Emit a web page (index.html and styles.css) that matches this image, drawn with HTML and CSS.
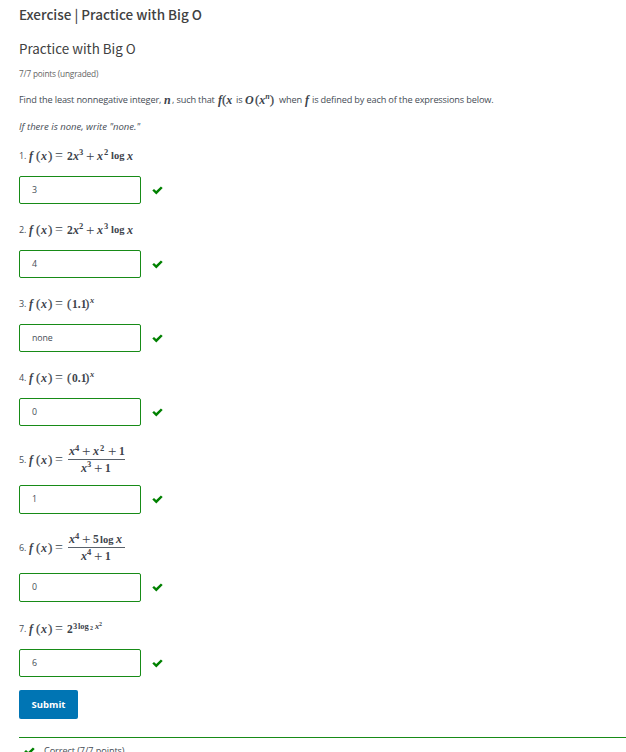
FILE: index.html
```html
<!DOCTYPE html>
<html lang="en">
<head>
<meta charset="utf-8">
<title>Practice with Big O</title>
<link rel="stylesheet" href="styles.css">
</head>
<body>
<svg width="0" height="0" class="defs"><symbol id="check" viewBox="0 0 11 9"><path d="M0.3 4.6 2 2.9 4.2 5 8.9 0.4 10.7 2.1 4.3 8.5Z" fill="#008100"/></symbol></svg>
<main>
<h1>Exercise | Practice with Big O</h1>
<h2>Practice with Big O</h2>
<p class="points">7/7 points (ungraded)</p>
<p class="intro"><span class="t1">Find the least nonnegative integer,</span><span class="m n1">n</span><span class="t2">, such that</span><span class="m fx">f<b>(</b>x</span><span class="t3">is</span><span class="m ox">O</span><span class="m xn"><b>(</b>x<sup>n</sup><b>)</b></span><span class="t4">when</span><span class="m f4">f</span><span class="t5">is defined by each of the expressions below.</span></p>
<p class="hint">If there is none, write "none."</p>

<section class="problem">
<div class="label"><span class="num">1.</span><span class="math"><i class="f">f</i><b class="lp">(</b><i class="x">x</i><b class="rp">)</b><b class="eq">=</b><b class="d">2</b><i class="x v">x</i><sup>3</sup><b class="plus">+</b><i class="x">x</i><sup>2</sup><b class="log">log</b><i class="x">x</i></span></div>
<div class="answer"><div class="field">3</div><svg class="check"><use href="#check"/></svg></div>
</section>
<section class="problem">
<div class="label"><span class="num">2.</span><span class="math"><i class="f">f</i><b class="lp">(</b><i class="x">x</i><b class="rp">)</b><b class="eq">=</b><b class="d">2</b><i class="x v">x</i><sup>2</sup><b class="plus">+</b><i class="x">x</i><sup>3</sup><b class="log">log</b><i class="x">x</i></span></div>
<div class="answer"><div class="field">4</div><svg class="check"><use href="#check"/></svg></div>
</section>
<section class="problem">
<div class="label"><span class="num">3.</span><span class="math"><i class="f">f</i><b class="lp">(</b><i class="x">x</i><b class="rp">)</b><b class="eq">=</b><b class="lp">(</b><b class="dec">1.1</b><b class="cp">)</b><sup><i>x</i></sup></span></div>
<div class="answer"><div class="field">none</div><svg class="check"><use href="#check"/></svg></div>
</section>
<section class="problem">
<div class="label"><span class="num">4.</span><span class="math"><i class="f">f</i><b class="lp">(</b><i class="x">x</i><b class="rp">)</b><b class="eq">=</b><b class="lp">(</b><b class="dec">0.1</b><b class="cp">)</b><sup><i>x</i></sup></span></div>
<div class="answer"><div class="field">0</div><svg class="check"><use href="#check"/></svg></div>
</section>
<section class="problem tall">
<div class="label"><span class="num">5.</span><span class="math"><i class="f">f</i><b class="lp">(</b><i class="x">x</i><b class="rp">)</b><b class="eq">=</b></span><span class="frac"><span class="math top"><i class="x v">x</i><sup>4</sup><b class="plus">+</b><i class="x">x</i><sup class="wide">2</sup><b class="plus">+</b><b>1</b></span><span class="math bottom"><i class="x v">x</i><sup>3</sup><b class="plus">+</b><b>1</b></span></span></div>
<div class="answer"><div class="field">1</div><svg class="check"><use href="#check"/></svg></div>
</section>
<section class="problem tall">
<div class="label"><span class="num">6.</span><span class="math"><i class="f">f</i><b class="lp">(</b><i class="x">x</i><b class="rp">)</b><b class="eq">=</b></span><span class="frac"><span class="math top"><i class="x v">x</i><sup>4</sup><b class="plus">+</b><b class="five-n">5</b><b class="log">log</b><i class="x">x</i></span><span class="math bottom"><i class="x v">x</i><sup>4</sup><b class="plus">+</b><b>1</b></span></span></div>
<div class="answer"><div class="field">0</div><svg class="check"><use href="#check"/></svg></div>
</section>
<section class="problem seven">
<div class="label"><span class="num">7.</span><span class="math"><i class="f">f</i><b class="lp">(</b><i class="x">x</i><b class="rp">)</b><b class="eq">=</b><b class="d">2</b><span class="power"><b class="p3">3</b><b class="plog">log</b><b class="tiny sub">2</b><i class="px">x</i><b class="tiny up">2</b></span></span></div>
<div class="answer"><div class="field">6</div><svg class="check"><use href="#check"/></svg></div>
</section>
<button class="submit">Submit</button>
<footer><svg class="check"><use href="#check"/></svg><span>Correct (7/7 points)</span></footer>
</main>
</body>
</html>
```
FILE: styles.css
```css
* { box-sizing: border-box; }
html, body { margin: 0; height: 752px; overflow: hidden; background: #fff; }
body { font: 9.2px/14px "Open Sans", sans-serif; color: #454c55; }
.defs { display: block; height: 0; }
main { padding: 4px 0 0 19px; }
h1, h2, p { margin: 0; white-space: nowrap; }
h1, h2 { font-family: "Noto Sans CJK SC", sans-serif; line-height: 20px; color: #414141; }
h1 { font-size: 13.5px; font-weight: 500; }
h2 { font-size: 13.4px; font-weight: 400; margin-top: 14px; }
.points { font-size: 8.3px; letter-spacing: -.2px; line-height: 12px; margin-top: 10px; color: #646464; }
.intro { display: flex; height: 16px; line-height: 16px; margin-top: 12px; letter-spacing: -.16px; }
.intro > span { flex: none; }
.t1 { width: 145px; }
.n1 { width: 8px; }
.t2 { width: 46px; }
.fx { width: 18px; }
.t3 { width: 9px; }
.ox { width: 10px; }
.xn { width: 24px; }
.t4 { width: 26px; }
.f4 { width: 7px; }
.m, .math { font-family: "Liberation Serif", serif; font-size: 12px; font-weight: bold; color: #3c434b; letter-spacing: 0; }
.m { font-style: italic; }
.m b { font-style: normal; font-weight: normal; font-size: 13px; -webkit-text-stroke: .2px; }
.m sup { font-size: 8px; line-height: 0; }
.hint { font-style: italic; font-size: 9.5px; margin-top: 12px; height: 14px; }
.problem { height: 74px; }
.hint + .problem { margin-top: 12px; }
.label { display: flex; align-items: center; height: 20px; margin-bottom: 10px; }
.num { width: 10px; font-size: 9px; letter-spacing: -.2px; flex: none; }
.math { display: flex; height: 16px; line-height: 16px; white-space: nowrap; }
.math > * { flex: none; }
.math b { font-size: 11.5px; }
.f { width: 7px; }
.lp { width: 5px; }
.x { width: 7px; }
.rp { width: 7px; }
.math .lp, .math .rp, .math .cp { font-weight: normal; font-size: 13px; -webkit-text-stroke: .2px; }
.math .eq { width: 12px; font-weight: normal; font-size: 14px; }
.d, .v { width: 6px; }
.math sup { width: 7px; font-size: 8.5px; line-height: 9px; vertical-align: baseline; }
.math .wide { width: 8px; }
.math .plus { width: 11px; font-weight: normal; font-size: 15px; }
.log { width: 16px; }
.math .log { font-size: 10.5px; }
.dec { width: 13px; }
.cp { width: 5px; }
.answer { display: flex; align-items: center; height: 28px; }
.field { width: 122px; height: 28px; border: 1px solid #178b17; border-radius: 2px; padding: 0 12px; line-height: 26px; font-size: 8.8px; letter-spacing: -.1px; }
.check { width: 11px; height: 9px; margin-left: 11px; flex: none; }
.frac { display: grid; grid-template-rows: 16px 16px; width: 57px; margin-left: 1px; }
.top { border-bottom: 1px solid #59616b; padding-left: 1px; line-height: 15px; }
.bottom { padding-left: 13px; }
.five-n { width: 7px; }
.tall { height: 88px; padding-top: 2px; }
.tall .label { height: 32px; margin-bottom: 9px; }
.tall .field, .tall .answer { height: 29px; }
.seven { padding-top: 1px; height: 72px; }
.power { display: flex; font-size: 8.5px; line-height: 10px; }
.math .power b { font-size: 8.5px; }
.p3 { width: 5px; }
.plog { width: 12px; }
.px { width: 4px; }
.math .power .tiny { font-size: 6px; }
.sub { width: 5px; padding-top: 2px; }
.up { line-height: 6px; }
.submit { display: block; width: 59px; height: 29px; margin: 0; padding: 0; border: 0; border-radius: 2px; background: #0075b4; color: #fff; font: bold 9.5px "Open Sans", sans-serif; }
footer { display: flex; margin-top: 18px; padding-top: 6px; border-top: 1px solid #178b17; line-height: 14px; letter-spacing: -.1px; }
footer .check { margin: 3px 9px 0 5px; }
```
